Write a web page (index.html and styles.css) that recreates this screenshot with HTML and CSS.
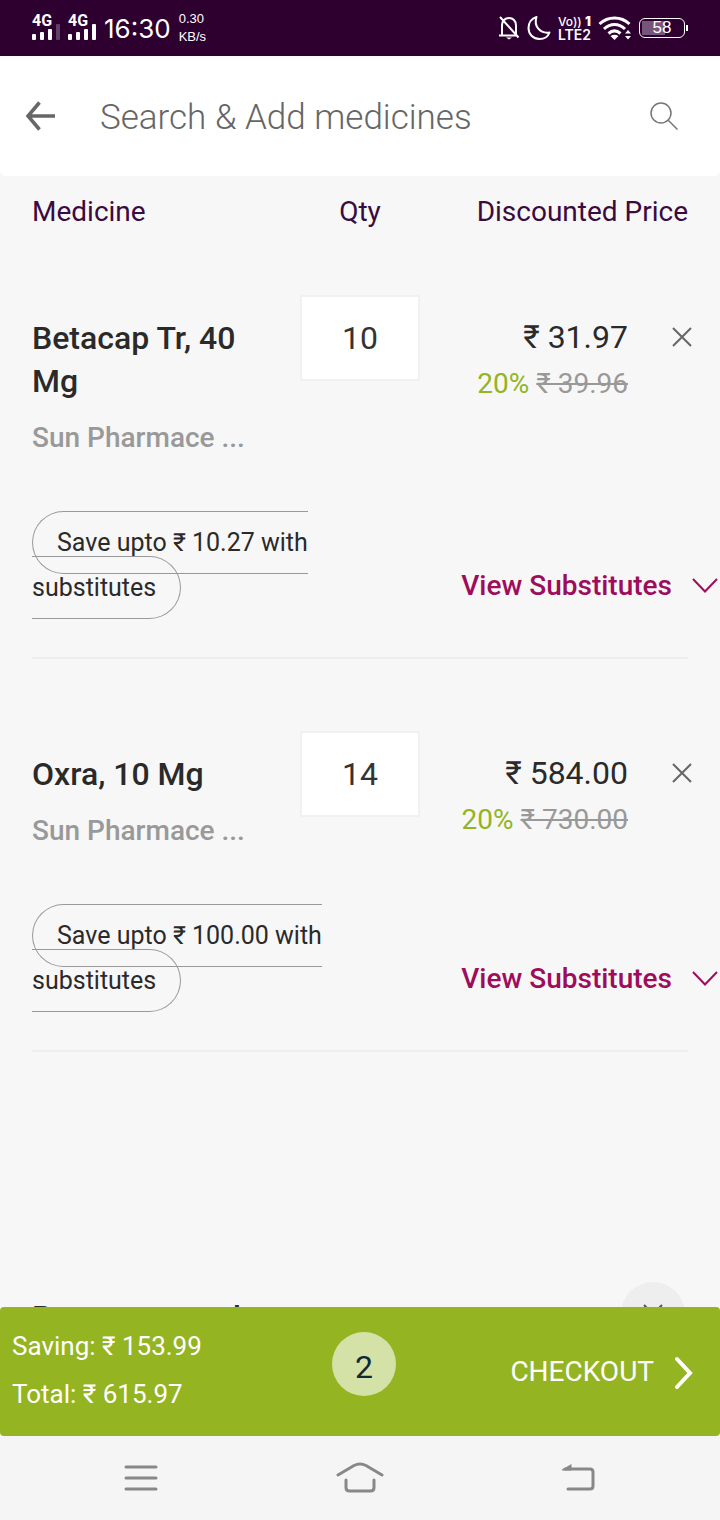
FILE: index.html
```html
<!DOCTYPE html>
<html lang="en">
<head>
    <meta charset="UTF-8">
    <meta name="viewport" content="width=device-width, initial-scale=1.0">
    <title>Medicine Cart</title>
    <link rel="stylesheet" href="styles.css">
</head>
<body>
    <div class="status-bar">
        <div class="signal">
            <span>4G</span>
            <svg width="29" height="16" viewBox="0 0 29 16" fill="#fff">
                <rect x="0" y="10" width="4" height="6" rx="1"/>
                <rect x="8" y="8" width="4" height="8" rx="1"/>
                <rect x="16" y="5" width="4" height="11" rx="1"/>
                <rect x="24" y="0" width="4" height="16" rx="1" opacity="0.25"/>
            </svg>
        </div>
        <div class="signal">
            <span>4G</span>
            <svg width="29" height="16" viewBox="0 0 29 16" fill="#fff">
                <rect x="0" y="10" width="4" height="6" rx="1"/>
                <rect x="8" y="8" width="4" height="8" rx="1"/>
                <rect x="16" y="5" width="4" height="11" rx="1"/>
                <rect x="24" y="0" width="4" height="16" rx="1"/>
            </svg>
        </div>
        <div class="time">16:30</div>
        <div class="speed">0.30<br>KB/s</div>

        <div class="status-icons">
            <svg width="22" height="26" viewBox="0 0 22 26" fill="none" stroke="#fff" stroke-width="2">
                <path d="M4 20V10.500C4 6 7 3 11 3s7 3 7 7.500V20M1 20.500h18M2 2l18.500 20.500"/>
                <path d="M8 22.500h6l-3 2z" fill="#fff" stroke="none"/>
            </svg>
            <svg width="24" height="26" viewBox="0 0 24 26" fill="none" stroke="#fff" stroke-width="2" stroke-linejoin="round">
                <path d="M9.500 2C4.500 3.500 1.500 8 1.500 13c0 6 4.500 11 11 11 4.500 0 8.500-2.500 10-6.500C13 19 6.500 11 9.500 2z"/>
            </svg>
            <div class="volte">
                <div class="volte-top"><span>Vo))</span><b>1</b></div>
                <div>LTE2</div>
            </div>
            <svg width="34" height="26" viewBox="0 0 34 26" fill="none" stroke="#fff" stroke-width="3">
                <path d="M1.500 9C10 1 23 1 31.500 9M6 14c6.500-6 14.500-6 21 0M10.500 18.500c4-3.500 8-3.500 12 0"/>
                <path d="M12.500 21q4-2.500 8 0l-4 4z" fill="#fff" stroke="none"/>
                <path d="M27 18.500l3-3.500 3 3.500zM27 21l3 3.500 3-3.500z" fill="#fff" stroke="none"/>
            </svg>
            <div class="battery">58</div>
        </div>
    </div>

    <header class="search-bar">
        <button class="icon-button" type="button" aria-label="Back">
            <svg width="32" height="30" viewBox="0 0 32 30" fill="none" stroke="#666" stroke-width="3.500">
                <path d="M15.500 1.500L4 15l11.500 13.500M3 15h28"/>
            </svg>
        </button>
        <input class="search-input" type="text" placeholder="Search &amp; Add medicines" aria-label="Search and add medicines">
        <button class="icon-button" type="button" aria-label="Search">
            <svg width="28" height="28" viewBox="0 0 28 28" fill="none" stroke="#777" stroke-width="1.500">
                <circle cx="11" cy="11" r="10"/>
                <path d="M18 18l9.500 9.500"/>
            </svg>
        </button>
    </header>

    <main class="content">
        <table class="cart">
            <colgroup>
                <col>
                <col class="col-qty">
                <col class="col-price">
                <col class="col-remove">
            </colgroup>
            <thead>
                <tr>
                    <th class="head-name">Medicine</th>
                    <th>Qty</th>
                    <th class="head-price" colspan="2">Discounted Price</th>
                </tr>
            </thead>
            <tbody>
                <tr class="item">
                    <td class="medicine">
                        <div class="name">Betacap Tr, 40 Mg</div>
                        <div class="company">Sun Pharmace ...</div>
                    </td>
                    <td><input class="qty" type="text" value="10" aria-label="Quantity of Betacap Tr, 40 Mg"></td>
                    <td class="price">
                        <div class="amount">₹ 31.97</div>
                        <div class="discount">20% <del>₹ 39.96</del></div>
                    </td>
                    <td class="remove">
                        <button type="button" aria-label="Remove Betacap Tr, 40 Mg">
                            <svg width="20" height="20" viewBox="0 0 20 20" fill="none" stroke="#666" stroke-width="2"><path d="M1 1l18 18M19 1L1 19"/></svg>
                        </button>
                    </td>
                </tr>
                <tr class="substitutes">
                    <td colspan="2"><span class="save">Save upto ₹ 10.27 with substitutes</span></td>
                    <td colspan="2">
                        <button class="view" type="button">View Substitutes
                            <svg width="26" height="15" viewBox="0 0 26 15" fill="none" stroke="#9d0d5c" stroke-width="2"><path d="M1 1l12 12.500L25 1"/></svg>
                        </button>
                    </td>
                </tr>
            </tbody>
            <tbody>
                <tr class="item">
                    <td class="medicine">
                        <div class="name">Oxra, 10 Mg</div>
                        <div class="company">Sun Pharmace ...</div>
                    </td>
                    <td><input class="qty" type="text" value="14" aria-label="Quantity of Oxra, 10 Mg"></td>
                    <td class="price">
                        <div class="amount">₹ 584.00</div>
                        <div class="discount">20% <del>₹ 730.00</del></div>
                    </td>
                    <td class="remove">
                        <button type="button" aria-label="Remove Oxra, 10 Mg">
                            <svg width="20" height="20" viewBox="0 0 20 20" fill="none" stroke="#666" stroke-width="2"><path d="M1 1l18 18M19 1L1 19"/></svg>
                        </button>
                    </td>
                </tr>
                <tr class="substitutes">
                    <td colspan="2"><span class="save">Save upto ₹ 100.00 with substitutes</span></td>
                    <td colspan="2">
                        <button class="view" type="button">View Substitutes
                            <svg width="26" height="15" viewBox="0 0 26 15" fill="none" stroke="#9d0d5c" stroke-width="2"><path d="M1 1l12 12.500L25 1"/></svg>
                        </button>
                    </td>
                </tr>
            </tbody>
        </table>

        <section class="more">
            <h2>Buy more products</h2>
            <button type="button" aria-label="Close products">
                <svg width="20" height="20" viewBox="0 0 20 20" fill="none" stroke="#555" stroke-width="2"><path d="M1 1l18 18M19 1L1 19"/></svg>
            </button>
        </section>
    </main>

    <footer class="checkout-bar">
        <div class="totals">
            <div>Saving: ₹ 153.99</div>
            <div>Total: ₹ 615.97</div>
        </div>
        <div class="count">2</div>
        <button class="checkout" type="button">CHECKOUT
            <svg width="20" height="36" viewBox="0 0 20 36" fill="none" stroke="#fff" stroke-width="4" stroke-linecap="round"><path d="M3 6l13 14L3 34"/></svg>
        </button>
    </footer>

    <nav class="nav-bar">
        <button type="button" aria-label="Recent apps">
            <svg width="48" height="32" viewBox="0 0 48 32" fill="none" stroke="#888" stroke-width="3" stroke-linecap="round"><path d="M9 5h30M9 16h30M9 27h30"/></svg>
        </button>
        <button type="button" aria-label="Home">
            <svg width="48" height="32" viewBox="0 0 48 32" fill="none" stroke="#888" stroke-width="3" stroke-linecap="round">
                <path d="M2 13L18 3.500q6-3 12 0L46 13M10 18v7.500q0 3.500 3.500 3.500h21q3.500 0 3.500-3.500V18"/>
            </svg>
        </button>
        <button type="button" aria-label="Back">
            <svg width="48" height="32" viewBox="0 0 48 32" fill="none" stroke="#888" stroke-width="3" stroke-linecap="round">
                <path d="M10 7h25q3 0 3 3v14q0 3-3 3H13"/>
                <path d="M7 8.500V7.500L16.500 2v6.500z" fill="#888" stroke="none"/>
            </svg>
        </button>
    </nav>
</body>
</html>
```

FILE: styles.css
```css
* {
    box-sizing: border-box;
}

body {
    margin: 0;
    height: 100vh;
    display: flex;
    flex-direction: column;
    background-color: #f7f7f7;
    font-family: Roboto, "Noto Sans", sans-serif;
    color: #2a2a2a;
}

button {
    padding: 0;
    border: none;
    background: none;
    font-family: inherit;
    cursor: pointer;
}

svg {
    display: block;
    flex-shrink: 0;
}

/* Status bar */
.status-bar {
    height: 56px;
    flex-shrink: 0;
    display: flex;
    align-items: center;
    gap: 8px;
    padding: 0 35px 0 32px;
    background-color: #2e0030;
    color: #fff;
}

.signal {
    position: relative;
    width: 28px;
    height: 26px;
    padding-top: 9px;
}

.signal span {
    position: absolute;
    top: 0;
    left: 0;
    font-size: 16px;
    line-height: 12px;
    font-weight: 700;
}

.time {
    font-family: Inter, sans-serif;
    font-size: 26px;
}

.speed {
    font-family: "Liberation Sans", sans-serif;
    font-size: 13px;
    line-height: 18px;
}

.status-icons {
    margin-left: auto;
    display: flex;
    align-items: center;
    gap: 7px;
}

.volte {
    font-family: Inter, sans-serif;
    font-size: 14px;
    line-height: 14px;
    font-weight: 600;
}

.volte-top {
    display: flex;
    justify-content: space-between;
    font-size: 13px;
    line-height: 13px;
}

.volte-top span {
    font-size: 12px;
    font-weight: 500;
}

.battery {
    position: relative;
    width: 46px;
    height: 20px;
    border: 1px solid #fff;
    border-radius: 6px;
    background: linear-gradient(to right, #77557a 58%, transparent 58%) 2px 2px / 40px 14px no-repeat;
    font-family: "Liberation Sans", sans-serif;
    font-size: 17px;
    line-height: 18px;
    text-align: center;
}

.battery::after {
    content: "";
    position: absolute;
    top: 6px;
    right: -4px;
    width: 2px;
    height: 6px;
    background-color: #fff;
}

/* Search */
.search-bar {
    height: 120px;
    flex-shrink: 0;
    display: flex;
    align-items: center;
    padding: 0 42px 0 24px;
    background-color: #fff;
    border-radius: 0 0 6px 6px;
}

.search-input {
    flex: 1;
    min-width: 0;
    margin: 0 16px 0 44px;
    padding: 2px 0 0;
    border: none;
    outline: none;
    background: none;
    font-family: inherit;
    font-size: 35px;
    font-weight: 300;
    color: #2a2a2a;
}

.search-input::placeholder {
    color: #666;
}

/* Cart */
.content {
    flex: 1;
    min-height: 0;
    overflow: hidden;
    padding: 0 32px;
}

.cart {
    width: 100%;
    table-layout: fixed;
    border-collapse: collapse;
}

.cart th,
.cart td {
    padding: 0;
    vertical-align: top;
}

.col-qty {
    width: 120px;
}

.col-price {
    width: 208px;
}

.col-remove {
    width: 60px;
}

.cart th {
    padding-top: 24px;
    font-size: 28px;
    line-height: 23px;
    font-weight: 400;
    color: #3a0a40;
}

.cart .head-name {
    text-align: left;
}

.cart .head-price {
    text-align: right;
}

.cart .item td {
    padding-top: 72px;
}

.cart .item .medicine {
    padding-top: 94px;
    padding-right: 32px;
}

.name {
    font-size: 32px;
    line-height: 43px;
    font-weight: 500;
}

.company {
    margin-top: 17px;
    font-size: 28px;
    line-height: 35px;
    font-weight: 500;
    color: #999;
}

.qty {
    display: block;
    width: 120px;
    height: 86px;
    padding: 0;
    border: 2px solid #f1f1f1;
    background-color: #fff;
    font-family: inherit;
    font-size: 32px;
    text-align: center;
    color: #333;
}

.cart .item .price {
    padding-top: 92px;
    text-align: right;
}

.amount {
    font-size: 32px;
    line-height: 45px;
}

.discount {
    font-size: 28px;
    line-height: 47px;
    color: #94b422;
}

.discount del {
    color: #999;
}

.cart .item .remove {
    padding-top: 104px;
}

.remove button {
    display: block;
    margin: 0 -4px 0 auto;
}

.cart .substitutes td {
    padding: 65px 0 47px;
    border-bottom: 2px solid #eee;
    vertical-align: bottom;
}

.save {
    padding: 16px 24px;
    border: 1px solid #999;
    border-radius: 32px;
    font-size: 25px;
    line-height: 45px;
}

.view {
    display: flex;
    align-items: center;
    gap: 20px;
    float: right;
    margin: 0 -30px 2px 0;
    font-size: 28px;
    line-height: 45px;
    font-weight: 500;
    color: #9d0d5c;
    white-space: nowrap;
}

/* Products section below the cart */
.more {
    display: flex;
    align-items: center;
    justify-content: space-between;
    margin-top: 230px;
    padding-right: 3px;
}

.more h2 {
    margin: 0;
    padding-top: 6px;
    font-size: 32px;
    line-height: 56px;
    font-weight: 500;
}

.more button {
    display: flex;
    align-items: center;
    justify-content: center;
    width: 64px;
    height: 64px;
    border-radius: 50%;
    background-color: #eee;
}

/* Checkout */
.checkout-bar {
    position: relative;
    flex-shrink: 0;
    display: grid;
    grid-template-columns: 1fr 64px 1fr;
    padding: 15px 4px 18px 12px;
    border-radius: 4px;
    background-color: #94b422;
    color: #fff;
}

.totals {
    font-size: 26px;
    line-height: 48px;
}

.count {
    width: 64px;
    height: 64px;
    margin-top: 10px;
    border-radius: 50%;
    background-color: #d4e1a7;
    font-size: 32px;
    line-height: 70px;
    text-align: center;
    color: #0e2a38;
}

.checkout {
    display: flex;
    align-items: center;
    justify-content: flex-end;
    gap: 20px;
    padding: 2px 22px 0 0;
    font-size: 28px;
    color: #fff;
}

/* Navigation */
.nav-bar {
    height: 84px;
    flex-shrink: 0;
    display: flex;
    align-items: center;
    justify-content: space-around;
    padding: 0 32px;
    background-color: #f5f5f5;
}
```
